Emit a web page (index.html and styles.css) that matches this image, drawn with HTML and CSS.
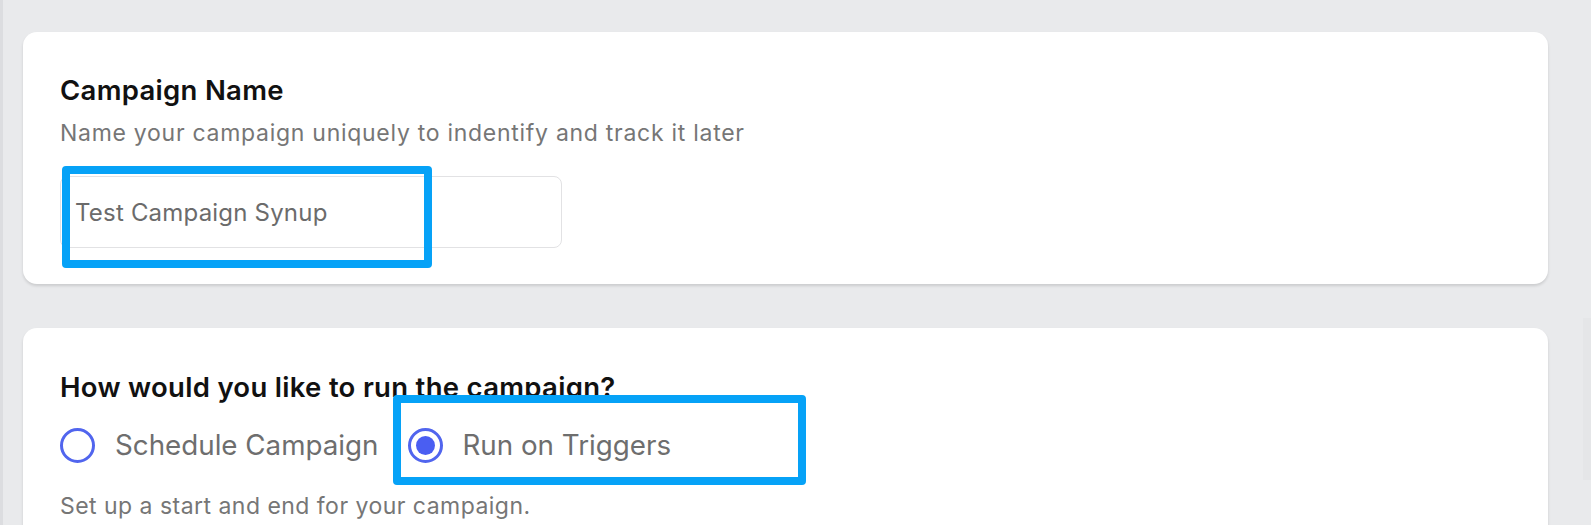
FILE: index.html
```html
<!DOCTYPE html>
<html lang="en">
<head>
<meta charset="utf-8">
<title>Campaign</title>
<link rel="stylesheet" href="styles.css">
</head>
<body>
<div class="page">
  <section class="card">
    <h2 class="card-title">Campaign Name</h2>
    <p class="card-sub">Name your campaign uniquely to indentify and track it later</p>
    <div class="field-wrap">
      <div class="text-input">Test Campaign Synup</div>
      <div class="highlight hl-input"></div>
    </div>
  </section>
  <section class="card card-run">
    <h2 class="card-title">How would you like to run the campaign?</h2>
    <div class="radio-row">
      <label class="radio-opt">
        <span class="radio"></span>
        <span class="radio-label">Schedule Campaign</span>
      </label>
      <label class="radio-opt">
        <span class="radio checked"><span class="dot"></span></span>
        <span class="radio-label">Run on Triggers</span>
        <span class="highlight hl-radio"></span>
      </label>
    </div>
    <p class="card-desc">Set up a start and end for your campaign.</p>
  </section>
  <div class="scrollbar"></div>
</div>
</body>
</html>
```
FILE: styles.css
```css
html, body {
  margin: 0;
  padding: 0;
  height: 100%;
  overflow: hidden;
}
body {
  background: #e9eaec;
  font-family: Inter, "Noto Sans", "Liberation Sans", sans-serif;
}
.page {
  position: relative;
  min-height: 100%;
  border-left: 3px solid #dcdde0;
  padding: 32px 43px 0 20px;
  box-sizing: border-box;
}
.card {
  background: #ffffff;
  border-radius: 14px;
  padding: 42px 37px 36px;
  box-shadow: 0 2px 3px rgba(0, 0, 0, 0.13);
}
.card + .card {
  margin-top: 44px;
}
.card-run {
  padding-top: 43px;
}
.card-title {
  margin: 0;
  font-size: 27.5px;
  line-height: 32px;
  font-weight: 600;
  letter-spacing: 0.3px;
  color: #111111;
}
.card-sub {
  margin: 13px 0 0;
  font-size: 23px;
  line-height: 28px;
  letter-spacing: 0.72px;
  color: #767676;
}
.field-wrap {
  position: relative;
  margin-top: 29px;
  width: 502px;
}
.text-input {
  box-sizing: border-box;
  height: 72px;
  border: 1px solid #e2e2e4;
  border-radius: 8px;
  padding: 0 14px;
  display: flex;
  align-items: center;
  font-size: 24px;
  letter-spacing: 0.2px;
  color: #6b6b6b;
}
.highlight {
  position: absolute;
  box-sizing: border-box;
  border: 8px solid #06a2f7;
  border-radius: 4px;
  pointer-events: none;
}
.hl-input {
  left: 2px;
  top: -10px;
  width: 370px;
  height: 102px;
}
.radio-row {
  display: flex;
  align-items: center;
  gap: 29px;
  margin-top: 25px;
}
.radio-opt {
  position: relative;
  display: flex;
  align-items: center;
  gap: 20px;
  height: 35px;
}
.radio {
  box-sizing: border-box;
  width: 35px;
  height: 35px;
  border: 3px solid #5165ee;
  border-radius: 50%;
  display: flex;
  align-items: center;
  justify-content: center;
}
.dot {
  width: 19px;
  height: 19px;
  border-radius: 50%;
  background: #4a5ef2;
}
.radio-label {
  font-size: 27.75px;
  line-height: 35px;
  color: #6e6e6e;
}
.hl-radio {
  left: -15px;
  top: -33px;
  width: 413px;
  height: 90px;
}
.card-desc {
  margin: 29px 0 0;
  font-size: 23px;
  line-height: 28px;
  letter-spacing: 0.47px;
  color: #767676;
}
.scrollbar {
  position: absolute;
  right: 0;
  top: 318px;
  width: 8px;
  height: 162px;
  background: #e5e6e8;
}
```
